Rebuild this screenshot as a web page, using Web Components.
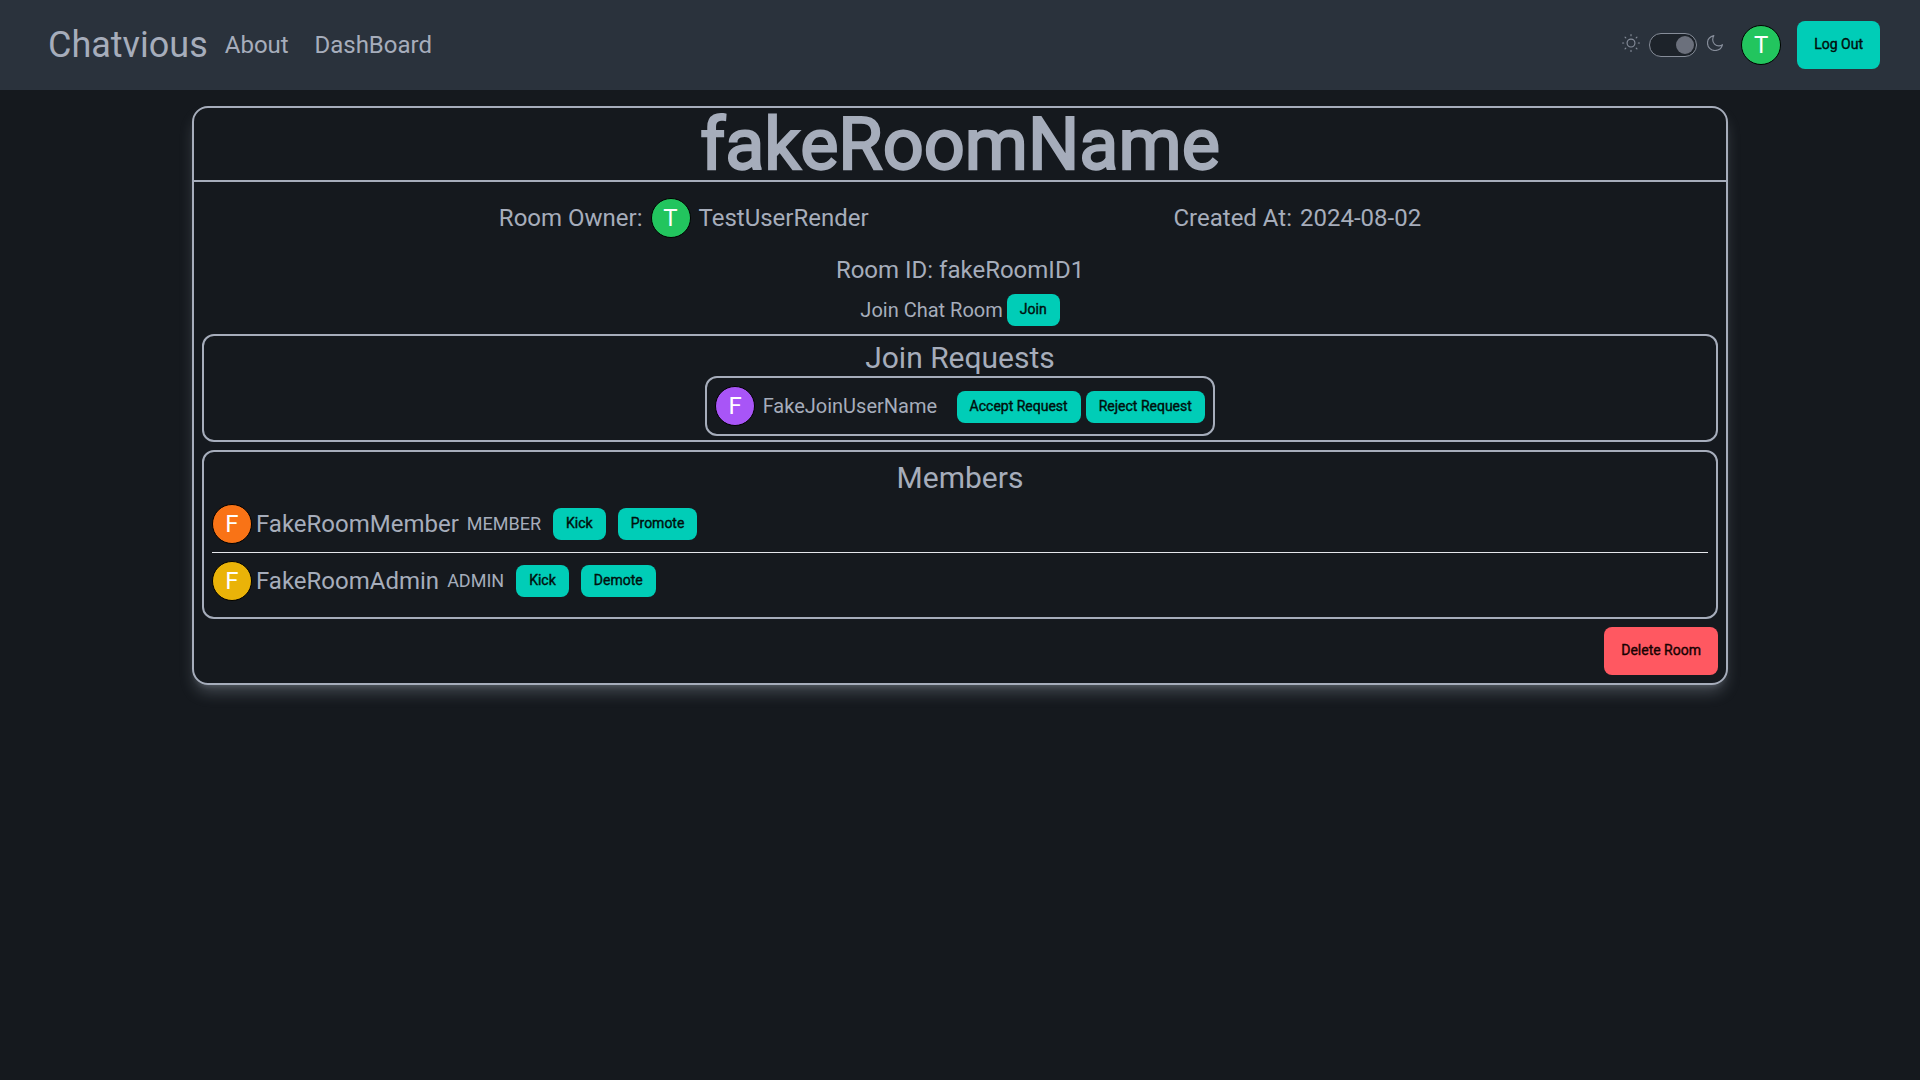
<!DOCTYPE html>
<html lang="en">
<head>
<meta charset="utf-8">
<title>Chatvious</title>
<style>
html,body{margin:0;height:100%;background:#15191e}
body{font-family:Roboto,sans-serif;color:#a6adbb;line-height:1.5}
</style>
</head>
<body>
<chat-app></chat-app>
<script>
const define=(name,html)=>customElements.define(name,class extends HTMLElement{
  constructor(){super();const t=document.createElement('template');t.innerHTML=html;this.attachShadow({mode:'open'}).append(t.content.cloneNode(true));}
});
define('user-avatar',`<style>
:host{display:flex;box-sizing:border-box;width:40px;height:40px;flex:none;border:1px solid #000;border-radius:50%;background:var(--bg,#22c55e);color:#fff;font-size:24px;line-height:32px;align-items:center;justify-content:center}
</style><slot></slot>`);
define('app-button',`<style>
:host{display:block;flex:none}
button{display:flex;align-items:center;justify-content:center;box-sizing:border-box;width:100%;height:48px;padding:0 17px 2px;margin:0;border:0;border-radius:8px;background:#00cdb7;color:#00100d;font:400 14px/14px Roboto,sans-serif;-webkit-text-stroke:.4px #00100d;white-space:nowrap}
:host([small]) button{height:32px;padding:0 13px 2px}
:host([danger]) button{background:#ff5861;color:#160202;-webkit-text-stroke-color:#160202}
</style><button><slot></slot></button>`);
define('theme-toggle',`<style>
:host{display:flex;align-items:center}
svg{display:block;fill:#a6adbb;opacity:.75;width:18px;height:18px;margin-bottom:4px}
.moon{width:16px;height:16px;margin-left:1px}
.sw{box-sizing:border-box;width:48px;height:24px;border:1px solid #868d99;border-radius:24px;background:#1d232a;margin:0 9px 0 9px;display:flex;justify-content:flex-end;align-items:center;padding-right:2px}
.sw i{width:18px;height:18px;border-radius:50%;background:#6b707c}
</style>
<svg viewBox="0 0 16 16"><path d="M8 11a3 3 0 1 1 0-6 3 3 0 0 1 0 6m0 1a4 4 0 1 0 0-8 4 4 0 0 0 0 8M8 0a.5.5 0 0 1 .5.5v1a.5.5 0 0 1-1 0v-1A.5.5 0 0 1 8 0m0 14a.5.5 0 0 1 .5.5v1a.5.5 0 0 1-1 0v-1A.5.5 0 0 1 8 14m8-6a.5.5 0 0 1-.5.5h-1a.5.5 0 0 1 0-1h1a.5.5 0 0 1 .5.5M2 8a.5.5 0 0 1-.5.5h-1a.5.5 0 0 1 0-1h1A.5.5 0 0 1 2 8m11.657-5.657a.5.5 0 0 1 0 .707l-.7.7a.5.5 0 1 1-.707-.707l.7-.7a.5.5 0 0 1 .707 0m-9.9 9.9a.5.5 0 0 1 0 .707l-.7.7a.5.5 0 0 1-.707-.707l.7-.7a.5.5 0 0 1 .707 0m9.9 1.407a.5.5 0 0 1-.707 0l-.7-.7a.5.5 0 0 1 .707-.707l.7.7a.5.5 0 0 1 0 .707M3.757 3.757a.5.5 0 0 1-.707 0l-.7-.7a.5.5 0 1 1 .707-.707l.7.7a.5.5 0 0 1 0 .707"/></svg>
<div class="sw"><i></i></div>
<svg class="moon" viewBox="0 0 16 16"><path fill="none" stroke="#a6adbb" stroke-width="1.15" stroke-linejoin="round" d="M6.8.6C3 1.500.5 4.400.5 8c0 4.200 3.300 7.500 7.500 7.500 3.700 0 6.700-2.400 7.500-5.800-1.200.8-2.300 1.100-3.600 1.100-3.400 0-6.200-2.600-6.200-6 0-1.500.3-2.900 1.100-4.200z"/></svg>`);
define('nav-bar',`<style>
:host{display:flex;box-sizing:border-box;height:90px;background:#2a323c;padding:0 40px 0 48px;align-items:center;justify-content:space-between}
nav,.right{display:flex;align-items:center}
.brand{font-size:36px;line-height:40px;margin-right:17px}
.link{font-size:24px;line-height:32px;margin-right:25.75px}
user-avatar{margin:0 16px 0 18px}
</style>
<nav><span class="brand">Chatvious</span><span class="link">About</span><span class="link">DashBoard</span></nav>
<div class="right"><theme-toggle></theme-toggle><user-avatar>T</user-avatar><app-button>Log Out</app-button></div>`);
define('join-request',`<style>
:host{display:flex;box-sizing:border-box;height:60px;border:2px solid #a6adbb;border-radius:12px;align-items:center;padding:0 8px;font-size:20px;line-height:28px}
.name{margin:0 19.5px 0 7.5px}
app-button{margin-top:2px}
app-button + app-button{margin-left:5px}
</style>
<user-avatar style="--bg:#a855f7"><slot name="initial"></slot></user-avatar><span class="name"><slot></slot></span><app-button small>Accept Request</app-button><app-button small>Reject Request</app-button>`);
define('member-row',`<style>
:host{display:flex;box-sizing:border-box;height:56px;align-items:center;font-size:24px;line-height:32px}
.role{font-size:18px;line-height:28px;margin:0 12px 0 8px}
.name{margin-left:4px}
app-button + app-button{margin-left:12px}
</style>
<user-avatar><slot name="initial"></slot></user-avatar><span class="name"><slot></slot></span><span class="role"><slot name="role"></slot></span><app-button small>Kick</app-button><app-button small><slot name="action"></slot></app-button>`);
define('room-panel',`<style>
:host{display:flex;flex-direction:column;box-sizing:border-box;border:2px solid #a6adbb;border-radius:12px}
h2{margin:0;text-align:center;font-weight:400;font-size:30px;line-height:36px}
</style><h2><slot name="title"></slot></h2><slot></slot>`);
define('chat-room',`<style>
:host{display:block;box-sizing:border-box;width:1536px;margin:16px auto 0;border:2px solid #a6adbb;border-radius:16px;box-shadow:0 10px 15px -3px rgba(166,173,187,.32),0 4px 6px -4px rgba(166,173,187,.32)}
h1{margin:0;padding-top:2px;font-size:72px;line-height:70px;font-weight:400;-webkit-text-stroke:2.25px #a6adbb;text-align:center;border-bottom:2px solid #a6adbb}
.meta{display:flex;justify-content:space-evenly;font-size:24px;line-height:32px;height:72px}
.meta div{display:flex;align-items:center}
.id{text-align:center;font-size:24px;line-height:32px}
.join{display:flex;justify-content:center;align-items:center;font-size:20px;line-height:28px;height:48px;gap:4px}
.req{height:108px;margin:0 8px 8px;padding-top:4px;align-items:center}
.mem{height:169px;margin:0 8px 8px;padding:8px 8px 0}
hr{margin:0;border:0;height:1px;background:#e5e7eb;width:100%}
.foot{display:flex;justify-content:flex-end;padding:0 8px 8px}
</style>
<h1>fakeRoomName</h1>
<div class="meta"><div>Room Owner:<user-avatar style="margin:0 8px">T</user-avatar>TestUserRender</div><div>Created At:<span style="margin-left:8px">2024-08-02</span></div></div>
<div class="id">Room ID: fakeRoomID1</div>
<div class="join">Join Chat Room<app-button small>Join</app-button></div>
<room-panel class="req"><span slot="title">Join Requests</span><join-request><span slot="initial">F</span>FakeJoinUserName</join-request></room-panel>
<room-panel class="mem"><span slot="title">Members</span>
<member-row style="--bg:#f97316"><span slot="initial">F</span>FakeRoomMember<span slot="role">MEMBER</span><span slot="action">Promote</span></member-row>
<hr>
<member-row style="--bg:#eab308"><span slot="initial">F</span>FakeRoomAdmin<span slot="role">ADMIN</span><span slot="action">Demote</span></member-row></room-panel>
<div class="foot"><app-button danger>Delete Room</app-button></div>`);
define('chat-app',`<style>:host{display:block}</style><nav-bar></nav-bar><chat-room></chat-room>`);
</script>
</body>
</html>
